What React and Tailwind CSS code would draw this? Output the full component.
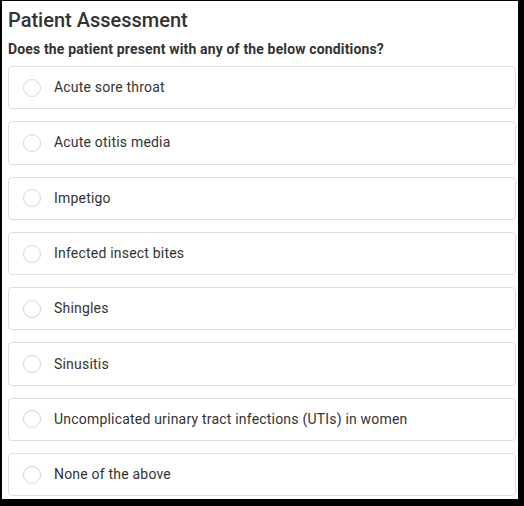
const conditions = [
  "Acute sore throat",
  "Acute otitis media",
  "Impetigo",
  "Infected insect bites",
  "Shingles",
  "Sinusitis",
  "Uncomplicated urinary tract infections (UTIs) in women",
  "None of the above",
];

function App() {
  return (
    <div
      className="w-[524px] h-[506px] bg-white border-black border-t-[1px] border-l-[2px] border-r-[6px] border-b-[7px] overflow-hidden text-[#333]"
      style={{ fontFamily: "Roboto, 'Liberation Sans', sans-serif" }}
    >
      <div className="pl-[6px] pr-[2px] pt-[5px]">
        {/* Header */}
        <h1 className="text-[20px] leading-[28px] font-medium">
          Patient Assessment
        </h1>
        <p className="mt-[5px] text-[14px] leading-[20px] font-bold tracking-[0.15px]">
          Does the patient present with any of the below conditions?
        </p>

        {/* Options */}
        <div className="mt-[7px] flex flex-col gap-3">
          {conditions.map((c) => (
            <label
              key={c}
              className="h-[43.3px] flex items-center border border-[#dedede] rounded-[4px] pl-[14px] cursor-pointer"
            >
              <span className="w-[18px] h-[18px] rounded-full border border-[#d6d6d6] bg-white shrink-0" />
              <span className="ml-[13px] text-[14px] tracking-[0.2px] text-[#333]">
                {c}
              </span>
            </label>
          ))}
        </div>
      </div>
    </div>
  );
}

export default App;
